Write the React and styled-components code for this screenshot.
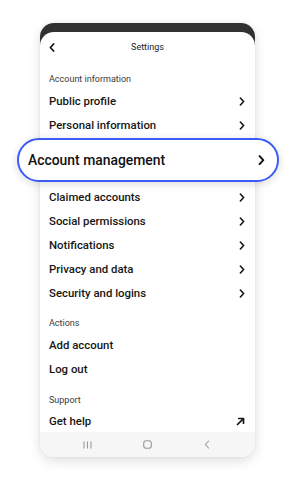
import React from "react";
import styled, { createGlobalStyle } from "styled-components";

const Global = createGlobalStyle`
  html, body { margin: 0; padding: 0; background: #ffffff; }
  body { font-family: Roboto, "Liberation Sans", Arial, sans-serif; -webkit-font-smoothing: antialiased; }
`;

const Page = styled.div`
  width: 301px;
  height: 482px;
  padding: 23px 0 0 40px;
  box-sizing: border-box;
`;

const Phone = styled.div`
  width: 215px;
  display: flex;
  flex-direction: column;
  border-radius: 14px;
  background: linear-gradient(to bottom, #313131 0, #313131 24px, #ffffff 24px);
  box-shadow: 0 4px 12px rgba(0, 0, 0, 0.13), 0 0 3px rgba(0, 0, 0, 0.06);
`;

const Screen = styled.div`
  margin-top: 9px;
  background: #ffffff;
  border-radius: 14px;
  display: flex;
  flex-direction: column;
`;

const Header = styled.div`
  height: 30px;
  display: flex;
  align-items: center;
  justify-content: center;
  position: relative;
  font-size: 9px;
  color: #222;
`;

const BackBtn = styled.span`
  position: absolute;
  left: 9px;
  top: 11px;
  display: flex;
`;

const SectionLabel = styled.div`
  padding: ${(p) => p.$top}px 9px 3px;
  line-height: 14px;
  font-size: 9px;
  color: #3a3a3a;
`;

const Row = styled.div`
  height: ${(p) => p.$h || 24}px;
  padding: 0 10px 0 9px;
  display: flex;
  align-items: center;
  justify-content: space-between;
  font-size: 11.4px;
  font-weight: 500;
  color: #161616;
`;

const Pill = styled.div`
  margin: 1px -24px 3px -23px;
  height: 44px;
  box-sizing: border-box;
  border: 2px solid #3b5bfb;
  border-radius: 22px;
  background: #ffffff;
  box-shadow: 0 2px 8px rgba(0, 0, 0, 0.14);
  padding: 0 12px 0 9px;
  display: flex;
  align-items: center;
  justify-content: space-between;
  font-size: 13.9px;
  font-weight: 500;
  color: #111;
`;

const NavBar = styled.div`
  height: 25px;
  background: #f6f6f6;
  border-radius: 0 0 14px 14px;
  display: grid;
  grid-template-columns: repeat(3, 1fr);
  align-items: center;
  justify-items: center;
  padding: 0 18px;
`;

const Chevron = ({ size = 1, color = "#151515", left = false, w = 1.6 }) => (
  <svg width={6 * size} height={9 * size} viewBox="0 0 6 9" fill="none">
    <path
      d={left ? "M4.6 1 L1.4 4.5 L4.6 8" : "M1.4 1 L4.6 4.5 L1.4 8"}
      stroke={color}
      strokeWidth={w}
      strokeLinecap="round"
      strokeLinejoin="round"
    />
  </svg>
);

const ArrowUpRight = () => (
  <svg width="9" height="9" viewBox="0 0 9 9" fill="none">
    <path d="M1.5 7.5 L7.2 1.8" stroke="#151515" strokeWidth="1.7" strokeLinecap="round" />
    <path d="M2.8 1.5 H7.5 V6.2" stroke="#151515" strokeWidth="1.7" strokeLinecap="round" strokeLinejoin="round" />
  </svg>
);

const RecentsIcon = () => (
  <svg width="9" height="8" viewBox="0 0 9 8" fill="none">
    <path d="M1 0.5 V7.5 M4.5 0.5 V7.5 M8 0.5 V7.5" stroke="#9a9a9a" strokeWidth="1.1" />
  </svg>
);

const HomeIcon = () => (
  <svg width="9" height="9" viewBox="0 0 9 9" fill="none">
    <rect x="0.7" y="0.7" width="7.6" height="7.6" rx="2.6" stroke="#9a9a9a" strokeWidth="1.1" />
  </svg>
);

const items1 = ["Public profile", "Personal information"];
const items2 = ["Claimed accounts", "Social permissions", "Notifications", "Privacy and data", "Security and logins"];

export default function App() {
  return (
    <>
      <Global />
      <Page>
        <Phone>
          <Screen>
            <Header>
              <BackBtn>
                <Chevron left size={1} color="#111" w={1.7} />
              </BackBtn>
              Settings
            </Header>
            <SectionLabel $top={10}>Account information</SectionLabel>
            {items1.map((t) => (
              <Row key={t}>
                {t}
                <Chevron />
              </Row>
            ))}
            <Pill>
              Account management
              <Chevron size={1.15} color="#111" w={1.7} />
            </Pill>
            {items2.map((t) => (
              <Row key={t}>
                {t}
                <Chevron />
              </Row>
            ))}
            <SectionLabel $top={11}>Actions</SectionLabel>
            <Row>Add account</Row>
            <Row>Log out</Row>
            <SectionLabel $top={12}>Support</SectionLabel>
            <Row $h={22}>
              Get help
              <ArrowUpRight />
            </Row>
            <NavBar>
              <RecentsIcon />
              <HomeIcon />
              <Chevron left size={1} color="#9a9a9a" w={1.1} />
            </NavBar>
          </Screen>
        </Phone>
      </Page>
    </>
  );
}
